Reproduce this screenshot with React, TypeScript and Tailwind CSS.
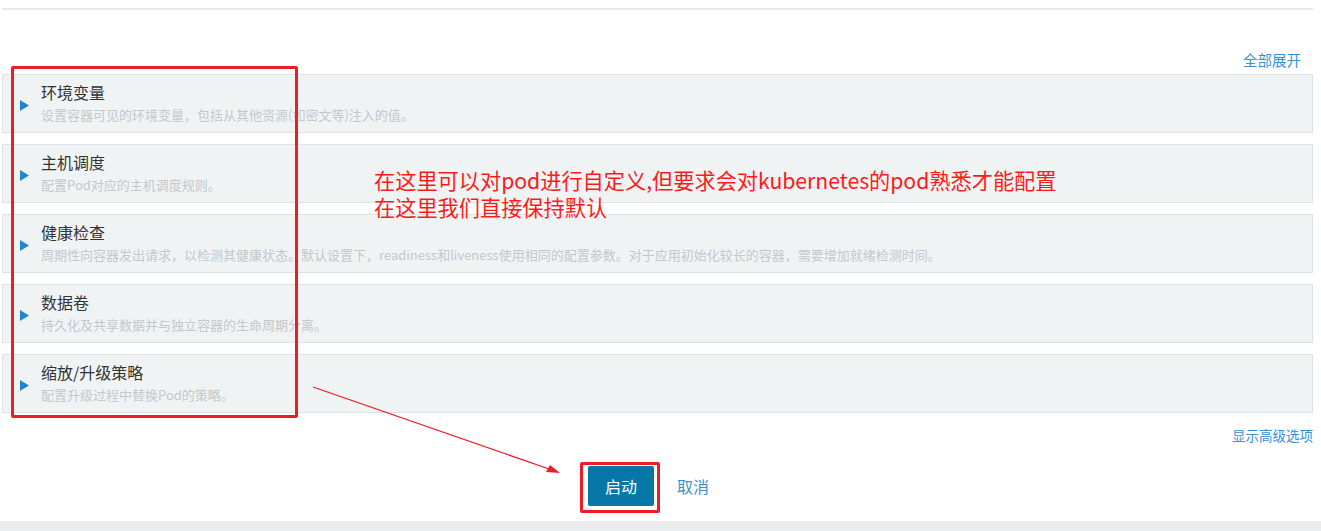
import React from "react";

const panels = [
  { t: "环境变量", d: "设置容器可见的环境变量，包括从其他资源(如密文等)注入的值。" },
  { t: "主机调度", d: "配置Pod对应的主机调度规则。" },
  {
    t: "健康检查",
    d: "周期性向容器发出请求，以检测其健康状态。默认设置下，readiness和liveness使用相同的配置参数。对于应用初始化较长的容器，需要增加就绪检测时间。",
  },
  { t: "数据卷", d: "持久化及共享数据并与独立容器的生命周期分离。" },
  { t: "缩放/升级策略", d: "配置升级过程中替换Pod的策略。" },
];

const font = { fontFamily: '"Noto Sans CJK SC", "Noto Sans", sans-serif' };

export default function App() {
  return (
    <div className="relative w-[1321px] h-[531px] bg-white overflow-hidden" style={font}>
      <div className="flex flex-col h-full">
        <div className="pt-[8px] pl-[2px]">
          <div className="h-[2px] w-[1311px] bg-[#e6eaec]" />
        </div>
        <div className="flex justify-end w-[1312px] pr-[11px] h-[64px] items-end pb-[5px]">
          <span className="text-[14.5px] leading-[19px] text-[#3590d6]">全部展开</span>
        </div>
        <div className="flex flex-col gap-[11px] pl-[2px] w-[1313px]">
          {panels.map((p) => (
            <div
              key={p.t}
              className="flex items-center h-[59px] border border-[#dde2e4] bg-[#f0f3f4]"
            >
              <div className="pl-[17px] pr-[12px] pt-[3px] flex">
                <svg width="9" height="11" viewBox="0 0 9 11">
                  <path d="M0 0 L9 5.5 L0 11 Z" fill="#2185d0" />
                </svg>
              </div>
              <div className="flex flex-col -mt-[2px]">
                <span className="text-[16px] leading-[20px] text-[#333333]">{p.t}</span>
                <span className="text-[13px] leading-[17px] text-[#c3c8cc] mt-[4px]">{p.d}</span>
              </div>
            </div>
          ))}
        </div>
        <div className="flex justify-end w-[1313px] pt-[13px]">
          <span className="text-[13.5px] leading-[18px] text-[#3590d6]">显示高级选项</span>
        </div>
        <div className="flex items-center pl-[588px] pt-[22px] gap-[23px]">
          <div className="w-[66px] h-[40px] bg-[#0677a7] rounded-[2px] flex items-center justify-center text-white text-[16px]">
            启动
          </div>
          <span className="text-[16px] text-[#3590d6]">取消</span>
        </div>
        <div className="mt-auto h-[10px] bg-[#e9edee]" />
      </div>

      {/* annotations */}
      <div className="absolute left-[11px] top-[66px] w-[287px] h-[352px] border-[3px] border-[#ee1c25] rounded-[2px]" />
      <div className="absolute left-[580px] top-[462px] w-[80px] h-[51px] border-[3px] border-[#ee1c25] rounded-[2px]" />
      <div
        className="absolute left-[374px] top-[166px] text-[21.2px] leading-[27px] text-[#ff1a1a]"
        style={{ fontFamily: '"Noto Sans CJK SC", sans-serif' }}
      >
        <div>在这里可以对pod进行自定义,但要求会对kubernetes的pod熟悉才能配置</div>
        <div>在这里我们直接保持默认</div>
      </div>
      <svg className="absolute left-0 top-0" width="1321" height="531">
        <line x1="313" y1="387" x2="552" y2="470" stroke="#ee1c25" strokeWidth="1.3" />
        <path d="M560 473 L546 472 L550 465 Z" fill="#ee1c25" />
      </svg>
    </div>
  );
}
